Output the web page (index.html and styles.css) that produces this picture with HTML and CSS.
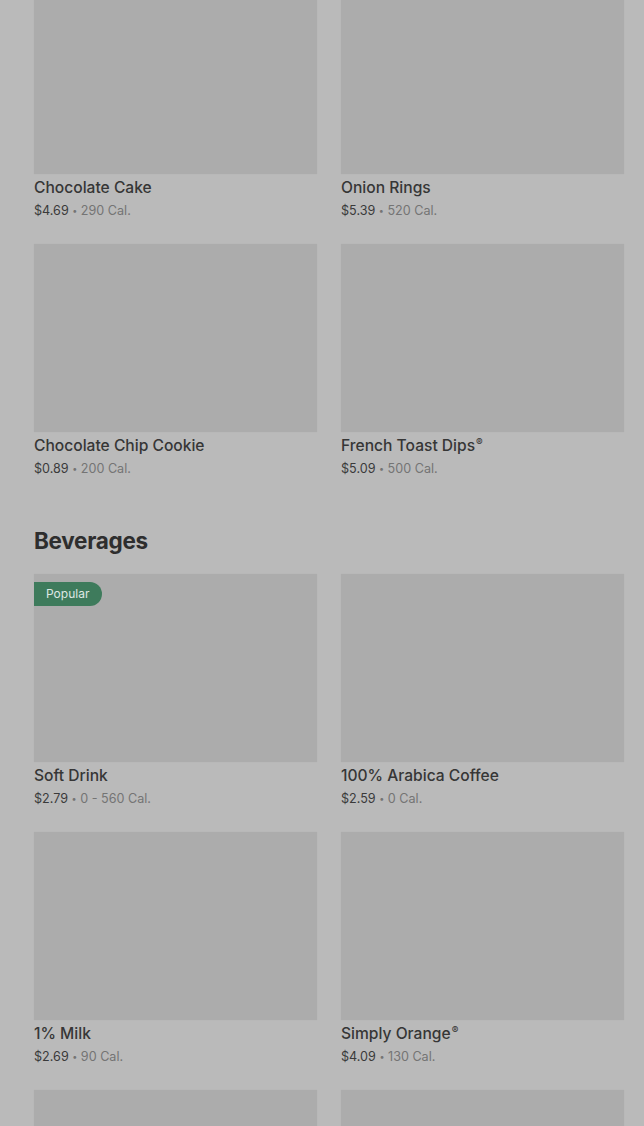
FILE: index.html
```
<!DOCTYPE html>
<html>
<head>
  <meta charset="utf-8">
  <title>Menu</title>
  <link rel="stylesheet" href="styles.css">
</head>
<body>
  <div class="menu">
    <div class="section">
      <div class="grid">
        <div class="item">
          <div class="item-img"></div>
          <div class="item-name">Chocolate Cake</div>
          <div class="item-meta"><span class="price">$4.69</span> <span class="dot">•</span> 290 Cal.</div>
        </div>
        <div class="item">
          <div class="item-img"></div>
          <div class="item-name">Onion Rings</div>
          <div class="item-meta"><span class="price">$5.39</span> <span class="dot">•</span> 520 Cal.</div>
        </div>
        <div class="item">
          <div class="item-img"></div>
          <div class="item-name">Chocolate Chip Cookie</div>
          <div class="item-meta"><span class="price">$0.89</span> <span class="dot">•</span> 200 Cal.</div>
        </div>
        <div class="item">
          <div class="item-img"></div>
          <div class="item-name">French Toast Dips<sup>®</sup></div>
          <div class="item-meta"><span class="price">$5.09</span> <span class="dot">•</span> 500 Cal.</div>
        </div>
      </div>
    </div>

    <div class="section">
      <h2>Beverages</h2>
      <div class="grid">
        <div class="item">
          <div class="item-img">
            <span class="badge">Popular</span>
          </div>
          <div class="item-name">Soft Drink</div>
          <div class="item-meta"><span class="price">$2.79</span> <span class="dot">•</span> 0 - 560 Cal.</div>
        </div>
        <div class="item">
          <div class="item-img"></div>
          <div class="item-name">100% Arabica Coffee</div>
          <div class="item-meta"><span class="price">$2.59</span> <span class="dot">•</span> 0 Cal.</div>
        </div>
        <div class="item">
          <div class="item-img"></div>
          <div class="item-name">1% Milk</div>
          <div class="item-meta"><span class="price">$2.69</span> <span class="dot">•</span> 90 Cal.</div>
        </div>
        <div class="item">
          <div class="item-img"></div>
          <div class="item-name">Simply Orange<sup>®</sup></div>
          <div class="item-meta"><span class="price">$4.09</span> <span class="dot">•</span> 130 Cal.</div>
        </div>
        <div class="item">
          <div class="item-img"></div>
        </div>
        <div class="item">
          <div class="item-img"></div>
        </div>
      </div>
    </div>
  </div>
</body>
</html>
```

FILE: styles.css
```
body {
  margin: 0;
  background-color: #bababa;
  font-family: Inter, "Liberation Sans", Arial, sans-serif;
  overflow: hidden;
  height: 1126px;
}

/* page is scrolled a little: first row of images is cut off at the top */
.menu {
  margin-top: -14px;
  padding: 0 20px 0 34px;
}

.section + .section {
  margin-top: 47px;
}

h2 {
  font-size: 22.5px;
  font-weight: 700;
  letter-spacing: -0.3px;
  line-height: 32px;
  color: #2e2e2e;
  margin: 0 0 17px 0;
}

.grid {
  display: grid;
  grid-template-columns: 283px 283px;
  column-gap: 24px;
  row-gap: 24px;
}

.item-img {
  position: relative;
  height: 188px;
  background-color: #acacac;
  box-shadow: 0 0 1px rgba(0, 0, 0, 0.05);
}

.badge {
  position: absolute;
  top: 8px;
  left: 0;
  height: 24px;
  line-height: 24px;
  padding: 0 13px 0 12px;
  font-size: 12px;
  color: #dfe8e3;
  background-color: #3e7b5c;
  border-radius: 0 12px 12px 0;
}

.item-name {
  margin-top: 4px;
  font-size: 15.6px;
  font-weight: 500;
  line-height: 20px;
  color: #363636;
}

.item-name sup {
  font-size: 10px;
  vertical-align: 5px;
  line-height: 0;
  margin-left: 1px;
}

.item-meta {
  margin-top: 4px;
  font-size: 12.6px;
  line-height: 18px;
  color: #747474;
}

.price {
  color: #3a3a3a;
}

.dot {
  font-size: 9px;
  vertical-align: 1px;
}
```
